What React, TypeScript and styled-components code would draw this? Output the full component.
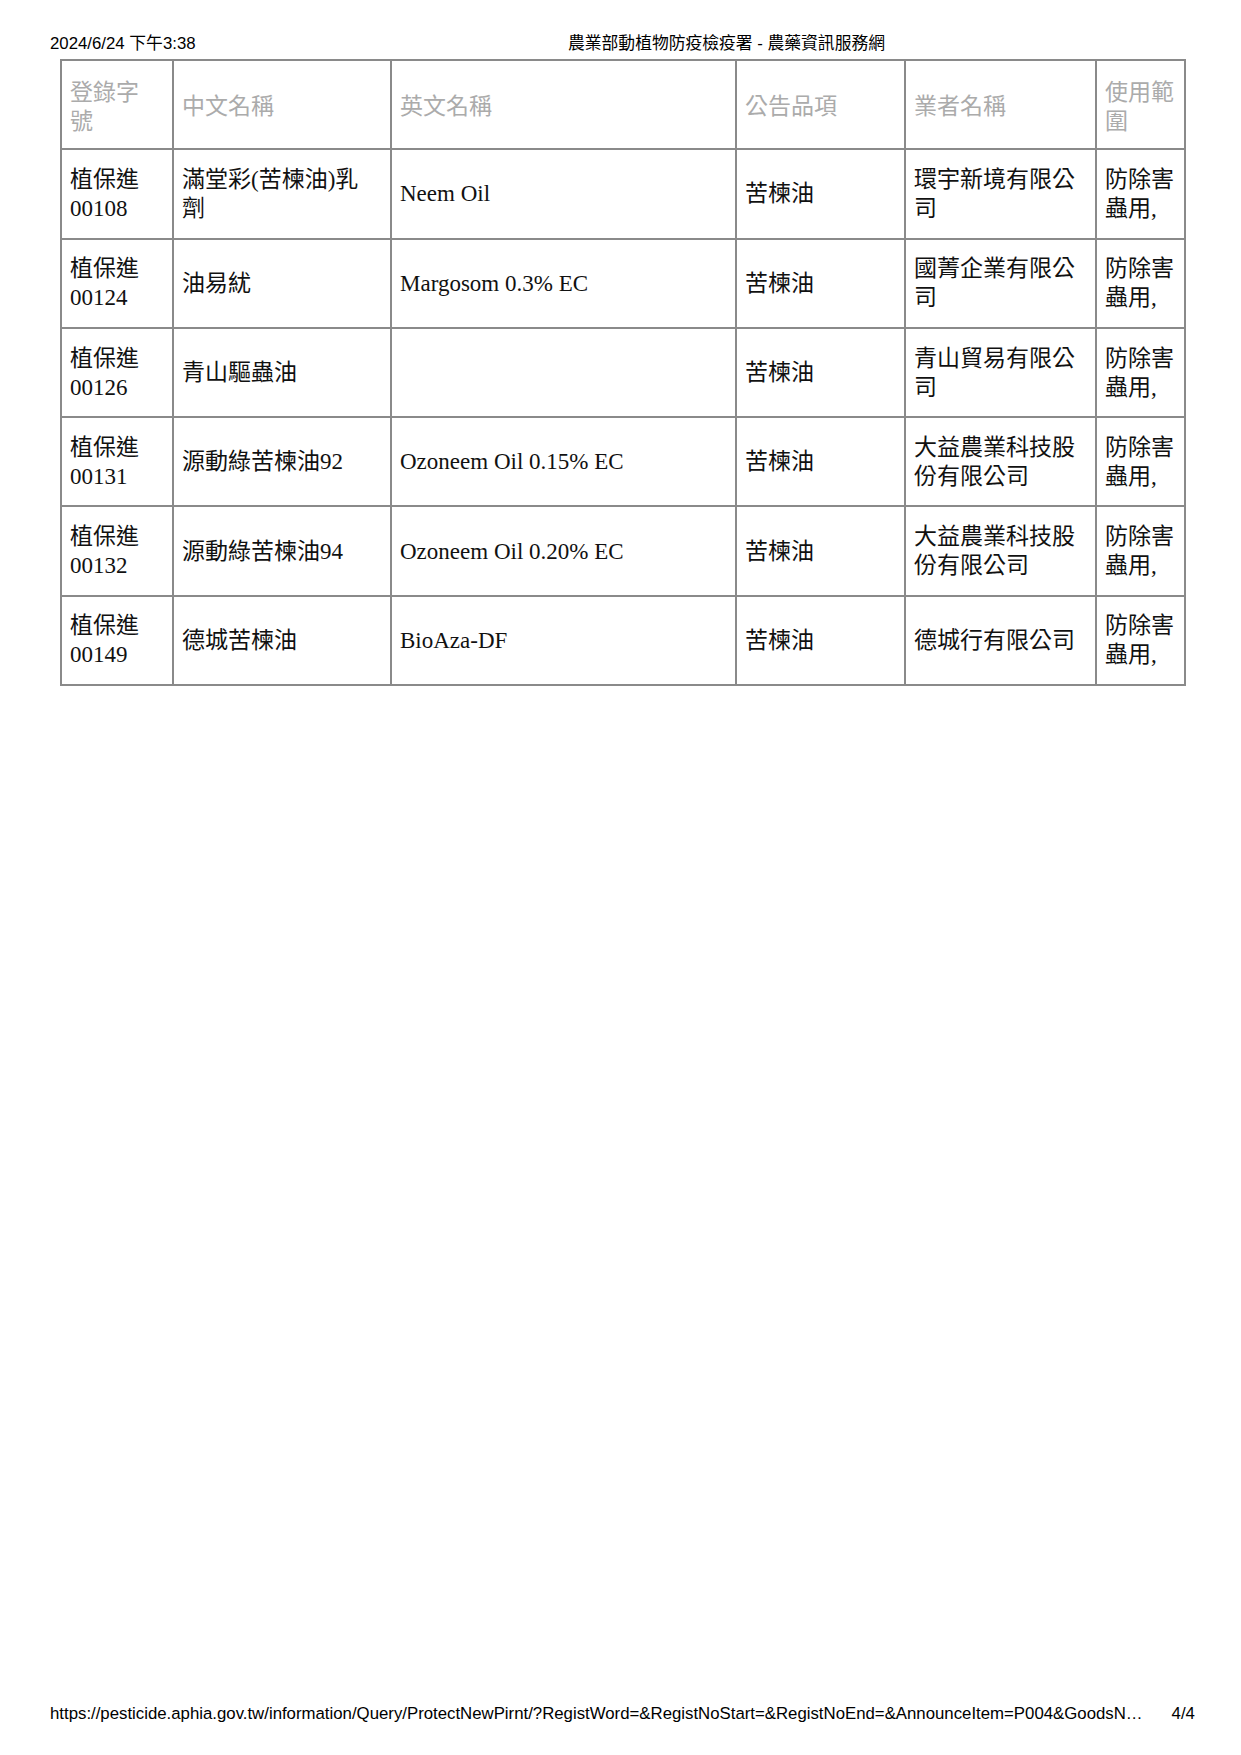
import React from "react";
import styled, { createGlobalStyle } from "styled-components";

const GlobalStyle = createGlobalStyle`
  html, body {
    margin: 0;
    padding: 0;
    background: #ffffff;
  }
  * { box-sizing: border-box; }
`;

const Page = styled.div`
  width: 1241px;
  height: 1755px;
  display: flex;
  flex-direction: column;
  background: #ffffff;
  font-family: "Liberation Sans", "Noto Sans CJK TC", sans-serif;
`;

const PrintHeader = styled.header`
  display: grid;
  grid-template-columns: 518px 1fr;
  padding: 34px 0 0 50px;
  height: 59px;
  font-size: 16.8px;
  line-height: 20px;
  color: #000;
`;

const PrintFooter = styled.footer`
  display: flex;
  align-items: center;
  padding: 0 0 31px 50px;
  font-size: 16.8px;
  line-height: 20px;
  color: #000;
`;

const FooterUrl = styled.span`
  white-space: nowrap;
`;

const PageNo = styled.span`
  margin-left: 29px;
`;

const Spacer = styled.div`
  flex: 1;
`;

const Table = styled.table`
  margin-left: 60px;
  width: 1124px;
  table-layout: fixed;
  border-collapse: collapse;
  border: 2px solid #8a8a8a;
  font-family: "Liberation Serif", "Noto Sans CJK TC", serif;
  font-size: 23px;
  line-height: 29px;
`;

const HeadCell = styled.th`
  border: 2px solid #8a8a8a;
  padding: 0 13px 0 8px;
  height: 89.3px;
  text-align: left;
  vertical-align: middle;
  font-weight: normal;
  color: #ababab;
  font-family: "Noto Sans CJK TC", sans-serif;
  &:last-child {
    padding-right: 4px;
  }
`;

const Cell = styled.td`
  border: 2px solid #8a8a8a;
  padding: 0 13px 0 8px;
  height: 89.3px;
  vertical-align: middle;
  color: #111;
  &:last-child {
    padding-right: 4px;
  }
`;

const cols = [112, 218, 345, 169, 191, 89];
const headers = ["登錄字號", "中文名稱", "英文名稱", "公告品項", "業者名稱", "使用範圍"];

const rows: string[][] = [
  ["植保進00108", "滿堂彩(苦楝油)乳劑", "Neem Oil", "苦楝油", "環宇新境有限公司", "防除害蟲用,"],
  ["植保進00124", "油易紌", "Margosom 0.3% EC", "苦楝油", "國菁企業有限公司", "防除害蟲用,"],
  ["植保進00126", "青山驅蟲油", "", "苦楝油", "青山貿易有限公司", "防除害蟲用,"],
  ["植保進00131", "源動綠苦楝油92", "Ozoneem Oil 0.15% EC", "苦楝油", "大益農業科技股份有限公司", "防除害蟲用,"],
  ["植保進00132", "源動綠苦楝油94", "Ozoneem Oil 0.20% EC", "苦楝油", "大益農業科技股份有限公司", "防除害蟲用,"],
  ["植保進00149", "德城苦楝油", "BioAza-DF", "苦楝油", "德城行有限公司", "防除害蟲用,"],
];

export default function App() {
  return (
    <>
      <GlobalStyle />
      <Page>
        <PrintHeader>
          <span>2024/6/24 下午3:38</span>
          <span>農業部動植物防疫檢疫署 - 農藥資訊服務網</span>
        </PrintHeader>
        <Table>
          <colgroup>
            {cols.map((w, i) => (
              <col key={i} style={{ width: w }} />
            ))}
          </colgroup>
          <thead>
            <tr>
              {headers.map((h) => (
                <HeadCell key={h}>{h}</HeadCell>
              ))}
            </tr>
          </thead>
          <tbody>
            {rows.map((r) => (
              <tr key={r[0]}>
                {r.map((c, i) => (
                  <Cell key={i}>{c}</Cell>
                ))}
              </tr>
            ))}
          </tbody>
        </Table>
        <Spacer />
        <PrintFooter>
          <FooterUrl>
            https://pesticide.aphia.gov.tw/information/Query/ProtectNewPirnt/?RegistWord=&amp;RegistNoStart=&amp;RegistNoEnd=&amp;AnnounceItem=P004&amp;GoodsN…
          </FooterUrl>
          <PageNo>4/4</PageNo>
        </PrintFooter>
      </Page>
    </>
  );
}
